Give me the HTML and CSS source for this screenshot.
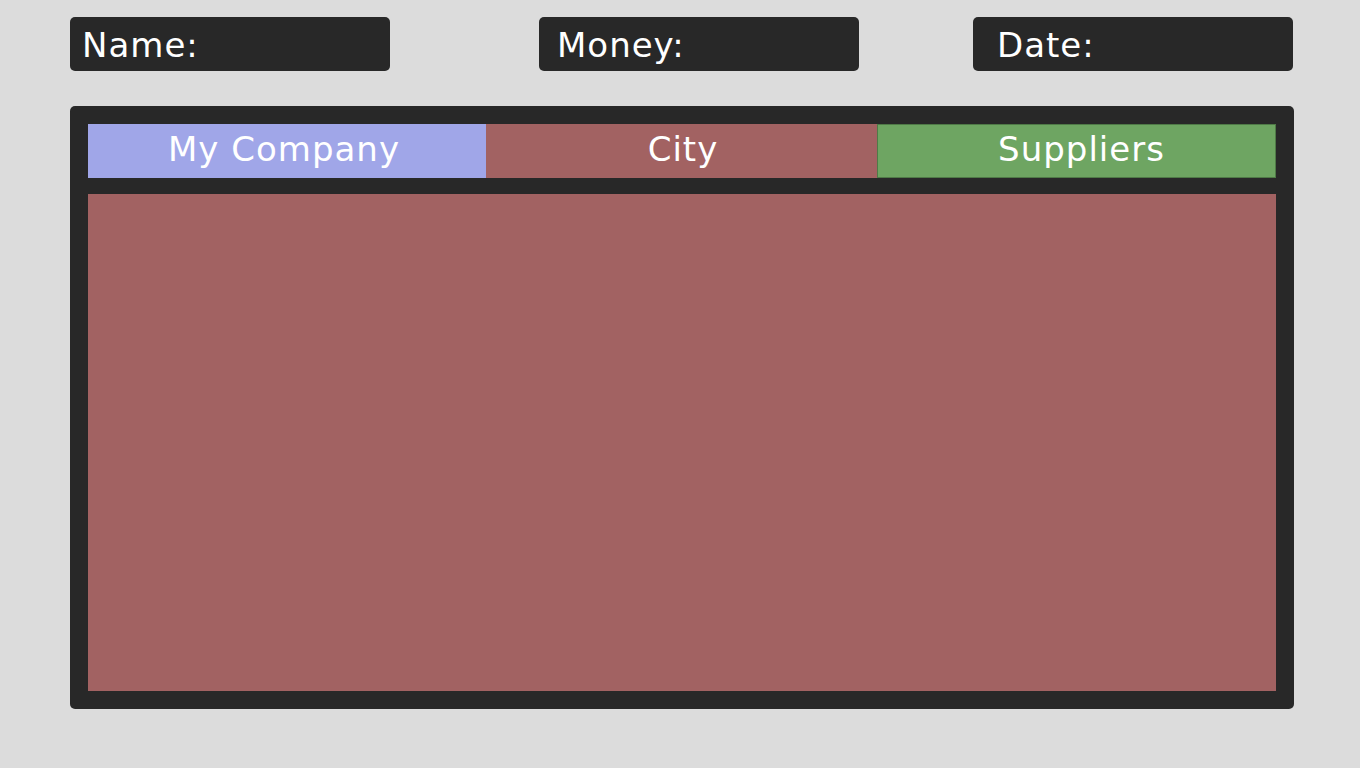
FILE: index.html
```html
<!DOCTYPE html>
<html>
<head>
<meta charset="utf-8">
<link rel="stylesheet" href="styles.css">
</head>
<body>
<div class="app">
  <div class="topbar">
    <div class="field field-name">Name:</div>
    <div class="field field-money">Money:</div>
    <div class="field field-date">Date:</div>
  </div>
  <div class="panel">
    <div class="tabs">
      <div class="tab tab-company">My Company</div>
      <div class="tab tab-city">City</div>
      <div class="tab tab-suppliers">Suppliers</div>
    </div>
    <div class="content"></div>
  </div>
</div>
</body>
</html>
```
FILE: styles.css
```css
html, body {
  margin: 0;
  padding: 0;
  background: #dcdcdc;
  width: 1360px;
  height: 768px;
  overflow: hidden;
}
.app {
  padding: 17px 0 0 70px;
  font-family: "DejaVu Sans", Verdana, sans-serif;
  color: #ffffff;
}
.topbar {
  display: flex;
  height: 54px;
}
.field {
  width: 320px;
  height: 54px;
  box-sizing: border-box;
  background: #282828;
  border-radius: 5px;
  font-size: 34px;
  line-height: 57px;
  letter-spacing: 1px;
  overflow: hidden;
}
.field-name { padding-left: 12px; }
.field-money { padding-left: 18px; margin-left: 149px; }
.field-date { padding-left: 24px; margin-left: 114px; }
.panel {
  margin-top: 35px;
  width: 1224px;
  height: 603px;
  box-sizing: border-box;
  background: #282828;
  border-radius: 5px;
  padding: 18px;
  display: flex;
  flex-direction: column;
  gap: 16px;
}
.tabs {
  display: grid;
  grid-template-columns: 398px 391px 1fr;
  height: 54px;
}
.tab {
  font-size: 34px;
  line-height: 50px;
  text-align: center;
  letter-spacing: 1px;
}
.tab-company { background: #a0a6e8; padding-right: 6px; }
.tab-city { background: #a26262; padding-left: 3px; }
.tab-suppliers { background: #6ea562; box-shadow: inset 0 0 0 1px #4f7a47; padding-left: 10px; }
.content {
  flex: 1;
  background: #a26262;
}
```
